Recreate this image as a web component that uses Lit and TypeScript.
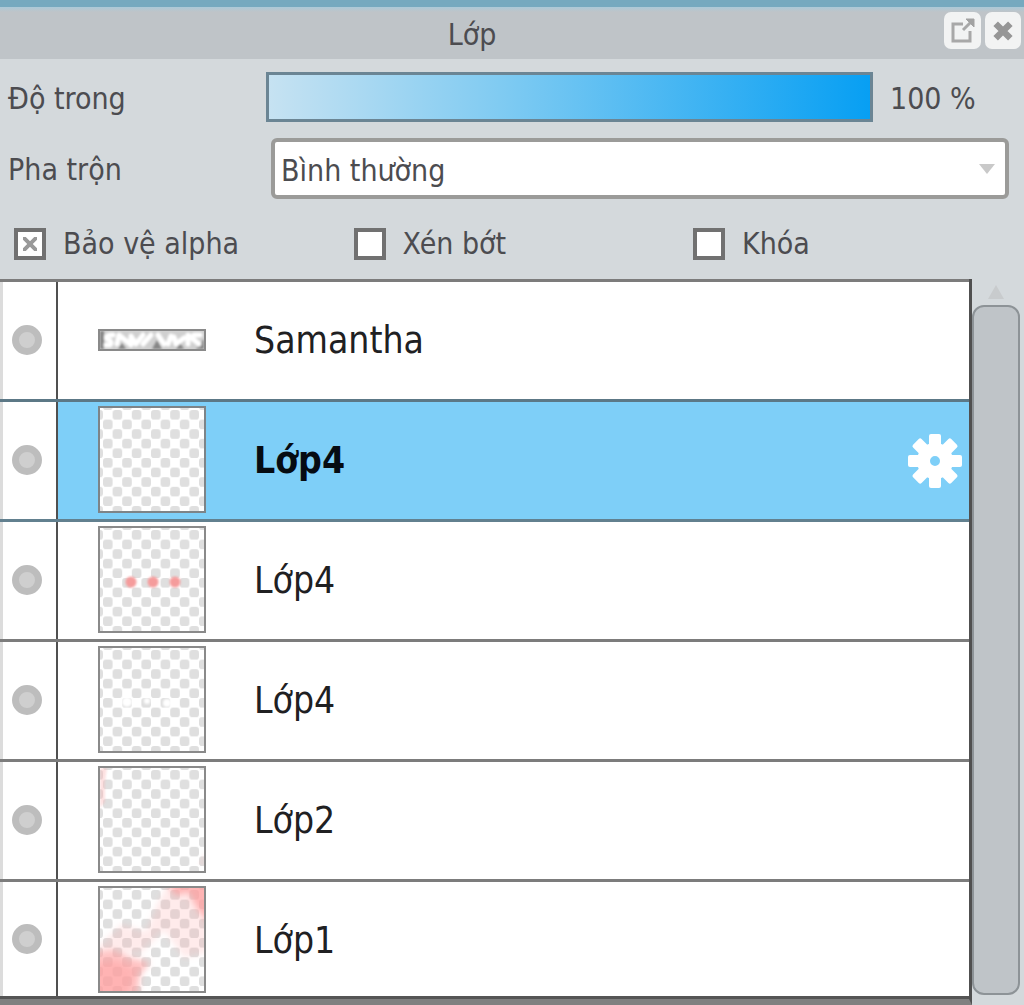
import { LitElement, html, svg, css, nothing } from "lit";
import { customElement, property, state } from "lit/decorators.js";
import { classMap } from "lit/directives/class-map.js";

type Art = "strip" | "empty" | "dots" | "specks" | "edge" | "blush";

interface Layer {
  id: number;
  name: string;
  art: Art;
}

const LAYERS: Layer[] = [
  { id: 6, name: "Samantha", art: "strip" },
  { id: 5, name: "Lớp4", art: "empty" },
  { id: 4, name: "Lớp4", art: "dots" },
  { id: 3, name: "Lớp4", art: "specks" },
  { id: 2, name: "Lớp2", art: "edge" },
  { id: 1, name: "Lớp1", art: "blush" },
];

/** Thumbnail of one layer: its drawing over a transparency checkerboard. */
@customElement("layer-thumb")
export class LayerThumb extends LitElement {
  @property() art: Art = "empty";

  static styles = css`
    :host {
      display: block;
      line-height: 0;
    }
    .frame {
      display: block;
      box-sizing: border-box;
      width: 108px;
      border: 2px solid #8a8a8a;
      background: #fff;
    }
    .frame.soft {
      border-color: #7d8488;
    }
  `;

  private drawing() {
    switch (this.art) {
      case "dots":
        return svg`<g fill="#f59c9c" filter="url(#fuzz)">
          <circle cx="31" cy="54" r="5.5" /><circle cx="53" cy="54" r="5.5" /><circle cx="75" cy="54" r="5.5" />
        </g>`;
      case "specks":
        return svg`<g fill="#fff" filter="url(#fuzz)">
          <circle cx="27" cy="54" r="5" /><circle cx="47" cy="53" r="3" /><circle cx="67" cy="55" r="4" />
        </g>`;
      case "edge":
        return svg`<g fill="#f9b4b4" opacity="0.4" filter="url(#fuzz)">
          <path d="M0 0H7L5 14V34L0 40Z" /><path d="M104 84V98L98 96Z" opacity="0.4" />
        </g>`;
      case "blush":
        return svg`<g filter="url(#soft)" fill="#ff9c9c">
          <path d="M-6 64L14 62L32 70L50 74L40 88L38 110H-6Z" opacity="0.6" />
          <path d="M-6 76L16 72L36 82L26 110H-6Z" opacity="0.4" />
          <path d="M-6 62L22 36L46 44L58 14L70 -6H110V64L84 70L64 42L40 66Z" opacity="0.2" />
          <path d="M66 -6H110V36L98 22L88 4L76 8Z" opacity="0.7" />
        </g>`;
      default:
        return nothing;
    }
  }

  render() {
    if (this.art === "strip") {
      return html`<svg class="frame" viewBox="0 0 104 18" aria-hidden="true">
        <filter id="fuzz"><feGaussianBlur stdDeviation="1.2" /></filter>
        <rect width="104" height="18" fill="#d0d0d0" />
        <g filter="url(#fuzz)">
          <path d="M0 0H4V18H0ZM18 18L22 12L26 18ZM52 18L57 9L62 18ZM76 18L80 12L84 18ZM96 18L104 8V18Z" fill="#858585" />
          <g fill="none" stroke="#fff" stroke-width="5" stroke-linecap="round" stroke-linejoin="round">
            <path d="M13 4Q5 4 7 8Q13 10 10 14H6" />
            <path d="M17 13L19 4L31 14V5L36 13L43 4" />
            <path d="M43 13L51 4M64 13L58 4M68 13L71 5" />
            <path d="M74 6L76 13L84 7M88 13V4L99 13M94 4H100" />
          </g>
        </g>
      </svg>`;
    }
    return html`<svg class=${classMap({ frame: true, soft: this.art === "empty" })} viewBox="0 0 104 103" aria-hidden="true">
      <defs>
        <pattern id="check" x="3" y="2" width="19.2" height="19.2" patternUnits="userSpaceOnUse">
          <rect x="9.6" width="9.6" height="9.6" rx="3" fill="#dfdfdf" />
          <rect y="9.6" width="9.6" height="9.6" rx="3" fill="#dfdfdf" />
        </pattern>
        <filter id="soft"><feGaussianBlur stdDeviation="3" /></filter>
        <filter id="fuzz"><feGaussianBlur stdDeviation="1" /></filter>
      </defs>
      <rect width="104" height="103" fill="url(#check)" />
      ${this.drawing()}
    </svg>`;
  }
}

@customElement("app-root")
export class AppRoot extends LitElement {
  @state() private selected = 5;
  @state() private opacity = 100;
  @state() private concealed: number[] = [];

  static styles = css`
    :host {
      display: block;
      font-family: "DejaVu Sans Condensed", "DejaVu Sans", sans-serif;
      color: #4c4c50;
    }
    * {
      box-sizing: border-box;
    }
    button {
      font: inherit;
      color: inherit;
      border: 0;
      margin: 0;
      padding: 0;
      background: none;
      cursor: pointer;
    }
    .panel {
      min-height: 100vh;
      display: flex;
      flex-direction: column;
      background: #d4d9dc;
      font-size: 30px;
      line-height: 32px;
    }
    .title {
      display: grid;
      grid-template-columns: 1fr 80px;
      align-items: center;
      height: 59px;
      border-top: 7px solid #76a9bf;
      background: linear-gradient(#acc9d8, #bfc4c8 5px);
    }
    .title h1 {
      margin: 0;
      padding-top: 3px;
      font-size: inherit;
      font-weight: 400;
      text-align: center;
    }
    .tools {
      display: flex;
      gap: 4px;
      align-self: start;
      justify-content: flex-end;
      padding: 5px 3px 0 0;
    }
    .tool {
      width: 37px;
      height: 37px;
      border-radius: 7px;
      background: #f2f3f3;
      display: grid;
      place-items: center;
    }
    .field {
      display: grid;
      align-items: center;
      padding-left: 8px;
    }
    .field label,
    .field output {
      padding-top: 3px;
    }
    .opacity {
      grid-template-columns: 258px 1fr 151px;
      padding-top: 13px;
    }
    .opacity output {
      padding-left: 17px;
    }
    .range {
      appearance: none;
      width: 100%;
      height: 50px;
      margin: 0;
      border: 3px solid #6b8594;
      background: linear-gradient(90deg, #c6e2f2, #7dcaf2 40%, #079ff3);
      cursor: pointer;
    }
    .range::-webkit-slider-thumb {
      appearance: none;
      width: 1px;
      height: 44px;
      background: transparent;
    }
    .blend {
      grid-template-columns: 263px 1fr;
      padding-top: 16px;
      padding-right: 15px;
    }
    .select {
      display: grid;
      align-items: center;
    }
    .select select,
    .select svg {
      grid-area: 1 / 1;
    }
    .select select {
      appearance: none;
      width: 100%;
      height: 61px;
      padding: 4px 40px 0 6px;
      border: 4px solid #9b9b99;
      border-radius: 6px;
      background: #fff;
      color: inherit;
      font: inherit;
    }
    .select svg {
      justify-self: end;
      margin-right: 14px;
      pointer-events: none;
    }
    .checks {
      display: grid;
      grid-template-columns: 1fr 1fr 331px;
      padding: 29px 0 19px 14px;
    }
    .check {
      display: flex;
      align-items: center;
      gap: 17px;
    }
    .check input {
      appearance: none;
      display: grid;
      place-items: center;
      width: 32px;
      height: 32px;
      margin: 0;
      border: 4px solid #717171;
      background: #fff;
    }
    .check input:checked::before {
      content: "";
      width: 14px;
      height: 14px;
      background:
        linear-gradient(45deg, transparent 39%, #999 40% 60%, transparent 61%),
        linear-gradient(-45deg, transparent 39%, #999 40% 60%, transparent 61%);
    }
    .body {
      flex: 1;
      display: flex;
    }
    .layers {
      flex: 1;
      margin: 0;
      padding: 0;
      list-style: none;
      border-right: 3px solid #505050;
      border-bottom: 6px solid #808080;
      background: #fff;
      color: #202022;
      font-size: 37px;
      line-height: 44px;
    }
    .layer {
      display: flex;
      height: 120px;
      border-top: 3px solid #7c7c7c;
    }
    .layer:last-child {
      border-bottom: 3px solid #555;
    }
    .eye {
      width: 58px;
      flex: none;
      display: grid;
      place-items: center start;
      padding: 0 0 2px 9px;
      border-left: 3px solid #dcdcdc;
      border-right: 2px solid #505050;
    }
    .dot {
      width: 30px;
      height: 30px;
      border: 7px solid #bdbdbd;
      border-radius: 50%;
      background: #cfcfcf;
    }
    .off .dot {
      opacity: 0.2;
    }
    .pick {
      flex: 1;
      display: flex;
      align-items: center;
      gap: 48px;
      padding: 0 0 2px 40px;
      text-align: left;
    }
    .layer:last-child .eye,
    .layer:last-child .pick {
      padding-bottom: 0;
    }
    .pick span {
      padding-top: 3px;
    }
    .current {
      background: linear-gradient(90deg, #fff 57px, #7ecff8 57px);
      color: #060c12;
      border-top-color: #5c7886;
    }
    .current .pick {
      font-weight: 700;
    }
    .current + .layer {
      border-top-color: #62808f;
    }
    .gear {
      align-self: center;
      margin-right: 7px;
      line-height: 0;
    }
    .scroll {
      width: 52px;
      display: flex;
      flex-direction: column;
      align-items: flex-start;
      padding-bottom: 10px;
    }
    .up {
      width: 48px;
      height: 26px;
      display: grid;
      place-items: center;
    }
    .thumb {
      flex: 1;
      width: 48px;
      border: 2px solid #8d9397;
      border-radius: 12px;
      background: #bfc4c8;
    }
  `;

  private toggle(id: number) {
    this.concealed = this.concealed.includes(id)
      ? this.concealed.filter((other) => other !== id)
      : [...this.concealed, id];
  }

  private renderGear() {
    return html`<button class="gear" aria-label="Cài đặt">
      <svg width="54" height="54" viewBox="-27 -27 54 54" fill="#fff" aria-hidden="true">
        ${[0, 45, 90, 135].map(
          (a) => svg`<rect x="-6" y="-27" width="12" height="17" rx="2" transform="rotate(${a})" />
            <rect x="-6" y="10" width="12" height="17" rx="2" transform="rotate(${a})" />`,
        )}
        <circle r="11.5" fill="none" stroke="#fff" stroke-width="13" />
      </svg>
    </button>`;
  }

  private renderLayer(layer: Layer) {
    const current = layer.id === this.selected;
    const off = this.concealed.includes(layer.id);
    return html`<li class=${classMap({ layer: true, current, off })}>
      <button class="eye" aria-label="Hiển thị" aria-pressed=${off ? "false" : "true"} @click=${() => this.toggle(layer.id)}>
        <span class="dot"></span>
      </button>
      <button class="pick" @click=${() => (this.selected = layer.id)}>
        <layer-thumb .art=${layer.art}></layer-thumb>
        <span>${layer.name}</span>
      </button>
      ${current ? this.renderGear() : nothing}
    </li>`;
  }

  private renderCheck(label: string, checked = false) {
    return html`<label class="check"><input type="checkbox" .checked=${checked} />${label}</label>`;
  }

  render() {
    return html`<section class="panel">
      <header class="title">
        <h1>Lớp</h1>
        <div class="tools">
          <button class="tool" aria-label="Tách cửa sổ">
            <svg width="27" height="27" viewBox="0 0 27 27" fill="none" stroke="#a8a8a8" stroke-width="3" aria-hidden="true">
              <path d="M14 7H4V24H21V14" />
              <path d="M14 13L22 5" />
              <path d="M17 2H25V10Z" fill="#a2a2a2" stroke="#a2a2a2" stroke-width="1" />
            </svg>
          </button>
          <button class="tool" aria-label="Đóng">
            <svg width="22" height="22" viewBox="0 0 24 24" stroke="#969696" stroke-width="7" aria-hidden="true">
              <path d="M4 4L20 20M20 4L4 20" />
            </svg>
          </button>
        </div>
      </header>
      <div class="field opacity">
        <label for="opacity">Độ trong</label>
        <input class="range" id="opacity" type="range" min="0" max="100" .value=${String(this.opacity)}
          @input=${(e: Event) => (this.opacity = Number((e.target as HTMLInputElement).value))} />
        <output for="opacity">${this.opacity} %</output>
      </div>
      <div class="field blend">
        <label for="blend">Pha trộn</label>
        <div class="select">
          <select id="blend"><option>Bình thường</option></select>
          <svg width="16" height="10" viewBox="0 0 16 10" fill="#c9c9c9" aria-hidden="true"><path d="M0 0H16L8 10Z" /></svg>
        </div>
      </div>
      <div class="checks">
        ${this.renderCheck("Bảo vệ alpha", true)} ${this.renderCheck("Xén bớt")} ${this.renderCheck("Khóa")}
      </div>
      <div class="body">
        <ul class="layers">${LAYERS.map((layer) => this.renderLayer(layer))}</ul>
        <div class="scroll">
          <button class="up" aria-label="Cuộn lên">
            <svg width="16" height="14" viewBox="0 0 16 14" fill="#c8cbcd" aria-hidden="true"><path d="M8 0L16 14H0Z" /></svg>
          </button>
          <div class="thumb"></div>
        </div>
      </div>
    </section>`;
  }
}
